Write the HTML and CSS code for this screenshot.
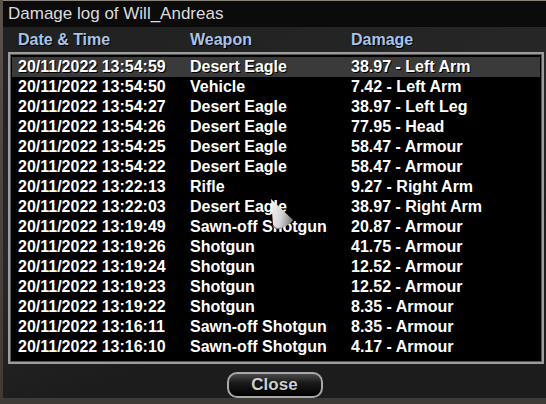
FILE: index.html
```html
<!DOCTYPE html>
<html lang="en">
<head>
    <meta charset="UTF-8">
    <title>Damage log</title>
    <link rel="stylesheet" href="styles.css">
</head>
<body>
    <div class="dialog">
        <div class="dialog-title">Damage log of Will_Andreas</div>
        <div class="dialog-body">
            <div class="list-head">
                <span>Date &amp; Time</span>
                <span>Weapon</span>
                <span>Damage</span>
            </div>
            <div class="list-box">
                <div class="row selected"><span>20/11/2022 13:54:59</span><span>Desert Eagle</span><span>38.97 - Left Arm</span></div>
                <div class="row"><span>20/11/2022 13:54:50</span><span>Vehicle</span><span>7.42 - Left Arm</span></div>
                <div class="row"><span>20/11/2022 13:54:27</span><span>Desert Eagle</span><span>38.97 - Left Leg</span></div>
                <div class="row"><span>20/11/2022 13:54:26</span><span>Desert Eagle</span><span>77.95 - Head</span></div>
                <div class="row"><span>20/11/2022 13:54:25</span><span>Desert Eagle</span><span>58.47 - Armour</span></div>
                <div class="row"><span>20/11/2022 13:54:22</span><span>Desert Eagle</span><span>58.47 - Armour</span></div>
                <div class="row"><span>20/11/2022 13:22:13</span><span>Rifle</span><span>9.27 - Right Arm</span></div>
                <div class="row"><span>20/11/2022 13:22:03</span><span>Desert Eagle</span><span>38.97 - Right Arm</span></div>
                <div class="row"><span>20/11/2022 13:19:49</span><span>Sawn-off Shotgun</span><span>20.87 - Armour</span></div>
                <div class="row"><span>20/11/2022 13:19:26</span><span>Shotgun</span><span>41.75 - Armour</span></div>
                <div class="row"><span>20/11/2022 13:19:24</span><span>Shotgun</span><span>12.52 - Armour</span></div>
                <div class="row"><span>20/11/2022 13:19:23</span><span>Shotgun</span><span>12.52 - Armour</span></div>
                <div class="row"><span>20/11/2022 13:19:22</span><span>Shotgun</span><span>8.35 - Armour</span></div>
                <div class="row"><span>20/11/2022 13:16:11</span><span>Sawn-off Shotgun</span><span>8.35 - Armour</span></div>
                <div class="row"><span>20/11/2022 13:16:10</span><span>Sawn-off Shotgun</span><span>4.17 - Armour</span></div>
            </div>
            <div class="dialog-buttons">
                <button class="btn">Close</button>
            </div>
        </div>
    </div>

    <!-- game mouse pointer -->
    <svg class="pointer" width="28" height="38" viewBox="0 0 28 38">
        <defs>
            <linearGradient id="coneShade" x1="0" y1="0" x2="1" y2="0.3">
                <stop offset="0" stop-color="#f6f6f6"/>
                <stop offset="0.6" stop-color="#d4d4d4"/>
                <stop offset="1" stop-color="#8c8c8c"/>
            </linearGradient>
        </defs>
        <path d="M2 1 L24 22 Q20 28 12 30 Q6 32 4 27 Z" fill="url(#coneShade)"/>
        <path d="M4 27 Q6 32 12 30" fill="none" stroke="#777" stroke-width="1.2"/>
    </svg>
</body>
</html>
```

FILE: styles.css
```css
body {
    margin: 0;
    width: 546px;
    height: 404px;
    overflow: hidden;
    background: linear-gradient(180deg, #5a524a 0%, #3e3a36 100%);
    font-family: 'Liberation Sans', Arial, sans-serif;
    position: relative;
}
.dialog {
    margin-left: 3px;
    width: 543px;
    height: 397px;
    border-top: 1px solid #8a837b;
    display: flex;
    flex-direction: column;
}
.dialog-title {
    height: 26px;
    background-color: #0b0b0b;
    color: #dcdcdc;
    font-size: 17px;
    line-height: 25px;
    padding-left: 5px;
}
.dialog-body {
    flex: 1;
    display: flex;
    flex-direction: column;
    background:
        linear-gradient(160deg, rgba(255, 255, 255, 0.02) 0%, rgba(255, 255, 255, 0.05) 45%, rgba(0, 0, 0, 0) 70%),
        #1c1c1c;
}
.list-head {
    display: grid;
    grid-template-columns: 172px 161px 1fr;
    height: 25px;
    line-height: 25px;
    padding-left: 15px;
    color: #a8c4e6;
    font-size: 16px;
    font-weight: bold;
    text-shadow: 1px 1px 0 #000;
}
.list-box {
    margin: 0 2px 0 5px;
    height: 305px;
    border: 2px solid #9c9c9c;
    box-shadow: inset 0 0 0 1px #555;
    background-color: #000;
    padding: 3px 2px 0 2px;
}
.row {
    display: grid;
    grid-template-columns: 172px 161px 1fr;
    height: 20px;
    line-height: 20px;
    padding-left: 6px;
    color: #fff;
    font-size: 16px;
    font-weight: bold;
    white-space: nowrap;
    text-shadow: 1px 1px 0 #000;
}
.row.selected {
    background-color: #3a3a3a;
}
.dialog-buttons {
    display: flex;
    justify-content: center;
    padding-top: 8px;
}
.btn {
    width: 96px;
    height: 26px;
    border: 2px solid #a8a8a8;
    border-radius: 10px;
    background: linear-gradient(180deg, #4a4a4a 0%, #1a1a1a 40%, #000 100%);
    color: #cfcfcf;
    font-family: 'Liberation Sans', Arial, sans-serif;
    font-size: 17px;
    font-weight: bold;
    line-height: 20px;
    padding: 0;
    text-shadow: 1px 1px 0 #000;
}
.pointer {
    position: absolute;
    left: 269px;
    top: 198px;
}
```
